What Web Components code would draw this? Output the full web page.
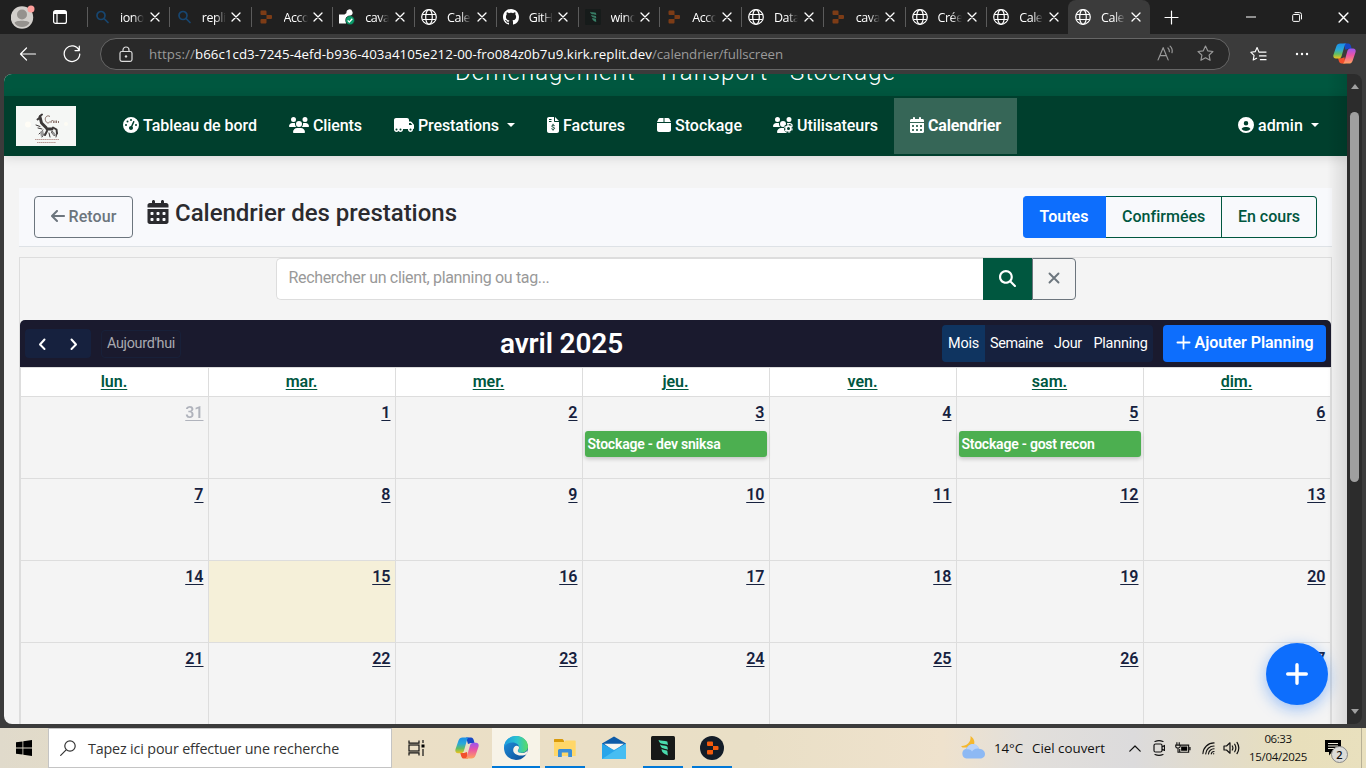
<!DOCTYPE html>
<html lang="fr">
<head>
<meta charset="utf-8">
<title>Calendrier des prestations</title>
<style>
html,body{margin:0;height:100%;overflow:hidden;background:#3b3b3b}
body{font-family:Roboto,"Liberation Sans",sans-serif}
</style>
</head>
<body>
<desktop-screen></desktop-screen>
<script>
const define = (name, html, ready) => customElements.define(name, class extends HTMLElement {
  connectedCallback() {
    if (this.shadowRoot) return;
    const root = this.attachShadow({ mode: 'open' });
    root.innerHTML = typeof html === 'function' ? html(this) : html;
    if (ready) ready(this, root);
  }
});

/* Text run spread over a given width */
define('fit-text', '<style>:host{display:inline-block;white-space:nowrap;flex:none}</style><slot></slot>', el => {
  const w = +el.getAttribute('w');
  const natural = el.getBoundingClientRect().width;
  el.style.letterSpacing = ((w - natural) / el.textContent.length).toFixed(3) + 'px';
  el.style.width = w + 'px';
});

const S = (vb, body) => [vb, body];
const F = (w, d) => [`0 0 ${w} 512`, `<path fill="currentColor" fill-rule="evenodd" d="${d}"/>`];
const L = (vb, d, sw = 1.2) => [vb, `<path fill="none" stroke="currentColor" stroke-width="${sw}" stroke-linecap="round" stroke-linejoin="round" d="${d}"/>`];
const USERS = 'M144 0a80 80 0 1 1 0 160A80 80 0 1 1 144 0zM512 0a80 80 0 1 1 0 160A80 80 0 1 1 512 0zM0 298.7C0 239.8 47.8 192 106.7 192h42.7c15.9 0 31 3.5 44.6 9.7c-1.3 7.2-1.9 14.7-1.9 22.3c0 38.2 16.8 72.5 43.3 96H21.3C9.6 320 0 310.4 0 298.7zM405.3 320c26.6-23.5 43.3-57.8 43.3-96c0-7.6-.7-15-1.9-22.3c13.6-6.3 28.7-9.7 44.6-9.7h42.7C592.2 192 640 239.8 640 298.7c0 11.8-9.6 21.3-21.3 21.3H405.3zM224 224a96 96 0 1 1 192 0 96 96 0 1 1 -192 0zM128 485.3C128 411.7 187.7 352 261.3 352H378.7C452.3 352 512 411.7 512 485.3c0 14.7-11.9 26.7-26.7 26.7H154.7c-14.7 0-26.7-11.9-26.7-26.7z';
const COPILOT = `<defs><linearGradient id="a" x1="0" y1="0" x2="0" y2="1"><stop offset="0" stop-color="#1b8fe8"/><stop offset=".4" stop-color="#2aa8d8"/><stop offset=".7" stop-color="#62bd62"/><stop offset="1" stop-color="#f2c21c"/></linearGradient><linearGradient id="b" x1="0" y1="0" x2="0" y2="1"><stop offset="0" stop-color="#9a55f0"/><stop offset=".45" stop-color="#ea55a4"/><stop offset="1" stop-color="#ffa35e"/></linearGradient></defs>
<path d="M11 1.500h5c1.600 0 2.200 1 2.700 2.600l.8 2.900h-3.500l-3 1z" fill="#1747c4"/><path d="M13 22.500H9c-1.600 0-2.400-1-2.900-2.600L5.300 17H9l3-1z" fill="#f2502c"/>
<path d="M7.500 1.500h6.800c-1.300.2-1.900 1.200-2.300 2.500L9 14.500c-.5 1.700-1.500 2.700-3.300 2.700H3C.8 17.200-.1 15.400.5 13.300L3.500 4.500c.7-2 2-3 4-3z" fill="url(#a)"/>
<path d="M16.500 22.500H9.700c1.300-.2 1.900-1.200 2.300-2.500l3-10.500c.5-1.700 1.500-2.700 3.300-2.700H21c2.200 0 3.100 1.800 2.500 3.900l-3 8.800c-.7 2-2 3-4 3z" fill="url(#b)"/>`;
const REPLIT = c => `<path fill="${c}" d="M1.500 0h4a1 1 0 0 1 1 1v3.500h-5a1 1 0 0 1-1-1V1a1 1 0 0 1 1-1zM6.500 4.500H11a1 1 0 0 1 1 1v2a1 1 0 0 1-1 1H6.500zM1.500 8.500h5V12a1 1 0 0 1-1 1h-4a1 1 0 0 1-1-1V9.500a1 1 0 0 1 1-1z"/>`;
const WIND = c => `<g fill="${c}"><path d="M7.500 4c2.500 1.200 6 .6 8.800 1.600L17 9C13.500 7.500 8.500 9 7.500 4z"/><path d="M9 8.500c2 1.300 4.800.9 7.300 1.900l.7 3.300c-3-1.400-7-.4-8-5.200z"/><path d="M10.500 13c1.500 1 3.500.8 5.800 1.800l.6 4.700c-2.400-1.500-5.800-1.500-6.400-6.500z"/></g>`;

const ICONS = {
  gauge: F(512, 'M0 256a256 256 0 1 1 512 0A256 256 0 1 1 0 256zM288 96a32 32 0 1 0 -64 0 32 32 0 1 0 64 0zM256 416c35.300 0 64-28.700 64-64c0-17.400-6.900-33.100-18.100-44.600L366 161.700c5.300-12.100-.2-26.300-12.300-31.600s-26.300 .2-31.600 12.300L257.900 288c-.6 0-1.300 0-1.900 0c-35.300 0-64 28.700-64 64s28.700 64 64 64zM176 144a32 32 0 1 0 -64 0 32 32 0 1 0 64 0zM96 288a32 32 0 1 0 0-64 32 32 0 1 0 0 64zm352-32a32 32 0 1 0 -64 0 32 32 0 1 0 64 0z'),
  users: F(640, USERS),
  truck: F(640, 'M64 32C28.700 32 0 60.700 0 96V304v80 16c0 44.200 35.800 80 80 80c26.200 0 49.400-12.600 64-32c14.600 19.400 37.800 32 64 32c44.200 0 80-35.800 80-80c0-5.500-.6-10.800-1.600-16H416h33.600c-1 5.200-1.600 10.500-1.600 16c0 44.200 35.800 80 80 80s80-35.800 80-80c0-5.500-.6-10.800-1.600-16H608c17.700 0 32-14.300 32-32V288 272 261.700c0-9.200-3.200-18.200-9-25.300l-58.800-71.800c-10.600-13-26.500-20.500-43.300-20.500H480V96c0-35.300-28.700-64-64-64H64zM585 256H480V192h48.800c2.400 0 4.700 1.100 6.200 2.900L585 256zM528 368a32 32 0 1 1 0 64 32 32 0 1 1 0-64zM176 400a32 32 0 1 1 64 0 32 32 0 1 1 -64 0zM80 368a32 32 0 1 1 0 64 32 32 0 1 1 0-64z'),
  invoice: S('0 0 384 512', '<path fill="currentColor" fill-rule="evenodd" d="M64 0C28.700 0 0 28.700 0 64V448c0 35.300 28.700 64 64 64H320c35.300 0 64-28.700 64-64V160H256c-17.700 0-32-14.300-32-32V0H64zM256 0V128H384L256 0zM64 64h80v32H64zM64 128h80v32H64z"/><path fill="none" stroke="#003f2d" stroke-width="30" stroke-linecap="round" d="M236 272c-24-18-84-18-84 20 0 46 90 22 90 68 0 42-64 42-92 20M194 232v28M194 392v30"/>'),
  box: F(448, 'M50.700 58.500L0 160H208V32H93.700C75.500 32 58.900 42.300 50.700 58.500zM240 160H448L397.300 58.500C389.100 42.300 372.500 32 354.300 32H240V160zm208 32H0V416c0 35.300 28.700 64 64 64H384c35.300 0 64-28.700 64-64V192z'),
  usersgear: S('0 0 640 512', `<path fill="currentColor" d="${USERS}"/><circle cx="496" cy="368" r="146" fill="#003f2d"/><circle cx="496" cy="368" r="76" fill="none" stroke="currentColor" stroke-width="56"/><circle cx="496" cy="368" r="118" fill="none" stroke="currentColor" stroke-width="36" stroke-dasharray="62 61.500"/>`),
  calendar: F(448, 'M128 0c17.700 0 32 14.300 32 32V64H288V32c0-17.700 14.300-32 32-32s32 14.300 32 32V64h48c26.500 0 48 21.500 48 48v48H0V112C0 85.500 21.500 64 48 64H96V32c0-17.700 14.300-32 32-32zM0 192H448V464c0 26.500-21.500 48-48 48H48c-26.500 0-48-21.500-48-48V192zm64 80v32c0 8.800 7.200 16 16 16h32c8.800 0 16-7.200 16-16V272c0-8.800-7.200-16-16-16H80c-8.800 0-16 7.200-16 16zm128 0v32c0 8.800 7.200 16 16 16h32c8.800 0 16-7.200 16-16V272c0-8.800-7.200-16-16-16H208c-8.800 0-16 7.200-16 16zm144-16c-8.800 0-16 7.200-16 16v32c0 8.800 7.200 16 16 16h32c8.800 0 16-7.200 16-16V272c0-8.800-7.200-16-16-16H336zM64 400v32c0 8.800 7.200 16 16 16h32c8.800 0 16-7.200 16-16V400c0-8.800-7.200-16-16-16H80c-8.800 0-16 7.200-16 16zm144-16c-8.800 0-16 7.200-16 16v32c0 8.800 7.200 16 16 16h32c8.800 0 16-7.200 16-16V400c0-8.800-7.200-16-16-16H208zm112 16v32c0 8.800 7.200 16 16 16h32c8.800 0 16-7.200 16-16V400c0-8.800-7.200-16-16-16H336c-8.800 0-16 7.200-16 16z'),
  user: F(512, 'M399 384.200C376.900 345.800 335.400 320 288 320H224c-47.400 0-88.900 25.800-111 64.200c35.200 39.200 86.200 63.800 143 63.800s107.800-24.700 143-63.800zM0 256a256 256 0 1 1 512 0A256 256 0 1 1 0 256zm256 16a72 72 0 1 0 0-144 72 72 0 1 0 0 144z'),
  left: F(448, 'M9.400 233.400c-12.500 12.500-12.500 32.800 0 45.300l160 160c12.500 12.500 32.800 12.500 45.300 0s12.500-32.800 0-45.300L109.200 288 416 288c17.700 0 32-14.300 32-32s-14.300-32-32-32l-306.700 0L214.600 118.600c12.500-12.500 12.500-32.800 0-45.300s-32.800-12.500-45.300 0l-160 160z'),
  search: F(512, 'M416 208c0 45.900-14.900 88.300-40 122.700L502.600 457.400c12.500 12.500 12.500 32.800 0 45.300s-32.800 12.500-45.300 0L330.700 376c-34.400 25.200-76.800 40-122.700 40C93.100 416 0 322.900 0 208S93.100 0 208 0S416 93.100 416 208zM208 352a144 144 0 1 0 0-288 144 144 0 1 0 0 288z'),
  times: L('0 0 12 12', 'M1.500 1.500l9 9M10.500 1.500l-9 9', 1.900),
  plus: L('0 0 16 16', 'M8 1.500v13M1.500 8h13', 1.900),
  plusbold: L('0 0 22 22', 'M11 1.700v18.600M1.700 11h18.600', 3.4),
  plusthin: L('0 0 15 15', 'M7.500 1v13M1 7.500h13', 1.2),
  chevl: L('0 0 8 14', 'M6.500 2.500L2 7.500l4.500 4.500', 2), chevr: L('0 0 8 14', 'M1.500 2.500L6 7.500 1.500 12', 2),
  close: L('0 0 10 10', 'M1 1l8 8M9 1l-8 8', 1.3),
  globe: S('0 0 16 16', '<g fill="none" stroke="currentColor" stroke-width="1.200"><circle cx="8" cy="8" r="7.300"/><ellipse cx="8" cy="8" rx="3.300" ry="7.300"/><path d="M1.500 5.500h13M1.500 10.500h13"/></g>'),
  bluesearch: L('0 0 16 16', 'M10 9.500l4 4M3 6.500a4 4 0 1 0 8 0a4 4 0 1 0-8 0', 1.7),
  replit: S('-1 -1.500 14 16', REPLIT('#7d3c16')),
  github: S('0 0 16 16', '<path fill="currentColor" d="M8 0C3.580 0 0 3.580 0 8c0 3.540 2.290 6.530 5.470 7.590.4.070.55-.17.55-.38 0-.19-.01-.82-.01-1.490-2.010.37-2.530-.49-2.690-.94-.09-.23-.48-.94-.82-1.130-.28-.15-.68-.52-.01-.53.630-.01 1.080.58 1.230.82.720 1.210 1.870.87 2.330.66.070-.52.280-.87.510-1.070-1.780-.2-3.640-.89-3.640-3.950 0-.87.310-1.590.82-2.150-.08-.2-.36-1.020.08-2.120 0 0 .67-.21 2.200.82.640-.18 1.320-.27 2-.27s1.360.09 2 .27c1.530-1.040 2.200-.82 2.200-.82.440 1.100.160 1.920.080 2.120.51.560.82 1.270.82 2.150 0 3.070-1.870 3.750-3.650 3.950.29.250.54.730.54 1.480 0 1.070-.01 1.930-.01 2.200 0 .21.150.46.550.38A8.010 8.010 0 0 0 16 8c0-4.420-3.580-8-8-8z"/>'),
  wind: S('0 0 24 24', '<rect width="24" height="24" rx="2" fill="#161b1a"/>' + WIND('#387e66')),
  windsurf: S('0 0 24 24', '<rect width="24" height="24" rx="1.500" fill="#171918"/>' + WIND('#4adcae')),
  replitapp: S('0 0 24 24', `<circle cx="12" cy="12" r="12" fill="#131c28"/><g transform="translate(6.500 5.500)">${REPLIT('#f25a0c')}</g>`),
  deploy: S('0 0 16 16', '<path fill="#fff" d="M0 5.500h5.500L7.500 4a3 3 0 0 1 5.800-1.500Q14.500 5 12 6.500L7 8.500v6H0z"/><circle cx="11" cy="11.300" r="4.500" fill="#0b9a69" stroke="#202020" stroke-width=".5"/><path fill="none" stroke="#fff" stroke-width="1.300" d="M8.700 11.400l1.600 1.700 3-3.300"/>'),
  avatar: S('0 0 24 24', '<circle cx="11" cy="12.500" r="11.200" fill="#d2cfcb"/><circle cx="11" cy="9.500" r="5" fill="#95928e"/><path fill="#95928e" d="M3.500 18c0-3 15-3 15 0-1.500 2.500-4.500 4-7.500 4s-6-1.500-7.500-4z"/><circle cx="20" cy="4" r="3.500" fill="#ff9f9b"/>'),
  workspace: S('0 0 14 14', '<g fill="none" stroke="#fff" stroke-width="1.200"><rect x=".6" y=".6" width="12.800" height="12.800" rx="2"/><path d="M4 4v9" /></g><path fill="#fff" d="M1 1h12v3H1z"/>'),
  back: L('0 0 18 14', 'M16.500 7H1.500M7.500 1l-6 6 6 6'),
  reload: L('0 0 18 18', 'M16 5.200A7.800 7.800 0 1 0 16.800 9M16.300 1.200v4.300h-4.300', 1.25),
  lock: S('0 0 14 16', '<g fill="none" stroke="#ddd" stroke-width="1.200"><rect x="1" y="5.500" width="12" height="9.800" rx="1.800"/><path d="M4 5.500V4a3 3 0 0 1 6 0v1.500"/></g><circle cx="7" cy="10.400" r="1.200" fill="#ddd"/>'),
  read: L('0 0 16 16', 'M1 14L5.800 2.500 10.500 14M2.700 10h6M10.300 2.800a4 4 0 0 1 1.300 3.500M12.300 1a6.500 6.500 0 0 1 1.800 6.300', 1.1),
  star: L('0 0 16 16', 'M8 1l2.100 4.500 4.900.6-3.600 3.400.9 4.900L8 12l-4.300 2.400.9-4.900L1 6.100l4.900-.6z', 1.1),
  favs: L('0 0 18 16', 'M11 6H9.500L7.500 1.200 5.500 5.500.8 6.100l3.500 3.400-.9 4.900L7 12.500M11 6h6M10 10h7M11 14h6', 1.2),
  dots: S('0 0 14 4', '<g fill="#fff"><circle cx="2" cy="2" r="1.200"/><circle cx="7" cy="2" r="1.200"/><circle cx="12" cy="2" r="1.200"/></g>'),
  copilot: S('0 0 24 24', COPILOT),
  minimize: L('0 0 10 10', 'M0 5h10', 1),
  restore: L('0 0 10 10', 'M.7 3.200q0-.7.7-.7h5.500q.7 0 .7.700v5.500q0 .7-.7.700H1.400q-.7 0-.7-.7zM3 .6h4.500q2 0 2 2V7', 1),
  windows: S('0 0 16 16', '<path d="M0 2.300L6.500 1.400v6.200H0zM7.300 1.300L16 0v7.600H7.300zM0 8.400h6.500v6.200L0 13.700zM7.300 8.400H16V16l-8.700-1.300z"/>'),
  wsearch: L('0 0 16 16', 'M.7 15.300l5.200-5.200M4.800 6a5.200 5.200 0 1 0 10.400 0A5.200 5.200 0 1 0 4.800 6', 1.2),
  taskview: S('0 0 17 16', '<g fill="none" stroke="#111" stroke-width="1.200"><path d="M1 .5v2.700h10V.5M1 15.500v-2.700h10v2.700M15 0v3M15 9v7"/><rect x="1" y="5" width="10" height="6"/></g><path d="M13.500 4.500h3v3h-3z"/>'),
  edge: S('0 0 24 24', '<defs><linearGradient id="t" x1="0" y1=".3" x2="1" y2=".3"><stop stop-color="#1d9be0"/><stop offset=".55" stop-color="#2bc4cf"/><stop offset="1" stop-color="#5ddb62"/></linearGradient><linearGradient id="l" x1="0" y1="0" x2="1" y2="1"><stop stop-color="#1f93e0"/><stop offset="1" stop-color="#0c4a92"/></linearGradient></defs><circle cx="12" cy="12" r="12" fill="url(#l)"/><path fill="url(#t)" d="M0 11.500C.3 5 5.500 0 12 0c7 0 12 5 12 10.500 0 3.800-2.900 6.300-6.300 6.300-2.400 0-3.700-.9-3.700-1.800 0-.7 1.200-1.200 1.200-3.200C15.200 9 12.300 6.500 8.600 6.500 4 6.500 1 9 0 11.500z"/><path fill="#f7f3e8" d="M15 11.500c0 1.900-1.200 2.600-1.200 3.500 0 1 1.500 2 3.900 2 2 0 4.500-.9 6-2.600l-1 3.600c-2 1.600-5.300 1.800-7.600 1.400-4-.6-6.100-3-5.900-5.600.1-2.200 1.600-4 3.500-4 1.300 0 2.300.8 2.300 1.700z"/>'),
  explorer: S('0 0 24 24', '<path fill="#d99a09" d="M1 3.500q0-.5.5-.5h8l1.500 1.500V7H1z"/><path fill="#ffd768" d="M1 6h10l1.500-1.500H22q.7 0 .7.700V20H1z"/><path fill="#3a8ed8" d="M5 21v-6.500q0-1.500 1.500-1.500h11q1.500 0 1.500 1.500V21h-3.800v-4.500H8.800V21z"/>'),
  mail: S('0 0 24 24', '<path fill="#0d5ba8" d="M0 7.500L12 .5l12 7v6H0z"/><path fill="#f7f5f0" d="M2 7.800h20L12 15z"/><path fill="#27a5ea" d="M0 7.500L12 14l12-6.500V23H0z"/><path fill="#46bdf2" d="M0 23L24 7.500V23z"/>'),
  weather: S('0 0 24 24', '<path fill="#f5b82e" d="M9.500 0c4.500 2.800 5 8 2 11.500H1.500L0 10c5 .5 10.500-3.500 9.500-10z"/><path fill="#8db9f4" d="M5.500 22.500a5 5 0 0 1-.3-9.800 6.800 6.800 0 0 1 12.800 0c3.800.3 6 2.600 6 5.300 0 2.800-2.200 4.500-5 4.500z"/><path fill="#b9d3fa" d="M5.500 13.500c1-4 4-5.500 6.500-5.500 3 0 5 2 6 4.500-4-.5-6 1.500-7 3-1-1.800-3-2.500-5.500-2z"/>'),
  up: L('0 0 12 7', 'M.8 6.200L6 1l5.200 5.200', 1.2),
  meet: L('0 0 12 16', 'M2 1.500Q6-.2 10 1.500M2 14.500q4 1.700 8 0M2.500 4h5q1.500 0 1.500 1.500v5Q9 12 7.500 12h-5Q1 12 1 10.500v-5Q1 4 2.500 4zM9 7l2.500-1.500v5L9 9', 1.2),
  battery: S('0 0 17 14', '<g fill="none" stroke="#111" stroke-width="1.200"><path d="M5 4h9.500v7.500H5V8M2 1v3M4.500 1v3M.8 4h4.700v1.500Q5.500 7 3.200 7T.8 5.500zM3.200 7v4.500H5"/></g><path d="M6.500 5.500H13V10H6.500zM15.200 6h1.300v3.500h-1.300z"/>'),
  wifi: L('0 0 14 14', 'M1 13A12 12 0 0 1 13 1.500M4 13.300a9 9 0 0 1 9-8.500M7 13.400a6 6 0 0 1 6-5.600M10 13.400a3 3 0 0 1 3-2.600M12.600 13v.3', 1.2),
  volume: L('0 0 17 14', 'M1 5h2.500L7 1.800v10.400L3.500 9H1zM9.300 5q1.200 2 0 4M11.700 3.200q2.300 3.800 0 7.600M14 1.400q3.600 5.600 0 11.200', 1.2),
  notif: S('0 0 16 16', '<path d="M0 0h16v12H7l-3 3.500V12H0z"/><path stroke="#f0ecdc" stroke-width="1.100" d="M3 3.500h10M3 6h10M3 8.500h7"/>'),
  horse: S('0 0 60 40', '<rect width="60" height="40" fill="#f5f7f5"/><circle cx="12" cy="18.500" r="3" fill="#fffdf6"/><circle cx="50" cy="18" r="2" fill="#fdfcf4"/><g fill="none" stroke="#3c3838" stroke-linecap="round"><path stroke-width="3" d="M24 11l1.500 6M26 17.500l4 4M31 23h5"/><path stroke-width="2" d="M21.500 13.500l2.500-2M24 10l2-1.500M37 21.500l3.500 2 .5 4M31 25l-2 4M36 26l2.500 3"/><path stroke-width="1" d="M20 19l4 1.500M22 22l4 1M28 28l-2 3M41 27l-1 4M33 27l1 4M27 24l-4 4"/></g><g fill="none" stroke="#7b5f58" stroke-width=".9"><path d="M34 10.500c-3-2-5.500 1-4.500 4s3.500 3 4.500 1M35 17q-.5-2.500 1.500-2.500T37.500 17M39 14.500v2.500M40.500 17v-2.500M42.500 15v2"/></g><path stroke="#b99b96" stroke-width="1.200" stroke-dasharray="1.500 .4" d="M19 33.500h24M21 36.500h19"/><path fill="#999" d="M24 26l3-2 1 4-3 3zM35 25l4 2 1 3-3-1z"/>')
};
customElements.define('x-icon', class extends HTMLElement {
  connectedCallback() {
    if (this.shadowRoot) return;
    const [vb, body] = ICONS[this.getAttribute('n')];
    const w = this.getAttribute('w'), h = this.getAttribute('h') || w;
    this.attachShadow({ mode: 'open' }).innerHTML =
      `<style>:host{display:block;flex:none;width:${w}px;height:${h}px}svg{display:block;width:100%;height:100%}</style><svg viewBox="${vb}">${body}</svg>`;
  }
});

/* ---------- Browser chrome ---------- */
define('browser-tab', el => `<style>
:host{display:flex;align-items:center;box-sizing:border-box;width:81.750px;height:34px;flex:none;padding-left:7px;color:#fff;font:12.500px "Open Sans","Noto Sans",sans-serif;position:relative}
:host::before{content:"";position:absolute;left:0;top:7px;width:1px;height:20px;background:#5b5b5b}
:host([active]){background:#3b3b3b;border-radius:8px 8px 0 0}
:host([active])::before{display:none}
.i{width:16px;display:flex;justify-content:center}
.t{width:24px;margin:0 5.500px 0 10px;overflow:hidden;white-space:nowrap;letter-spacing:-.45px;-webkit-mask-image:linear-gradient(90deg,#000 55%,transparent)}
</style><span class="i"><x-icon n="${el.getAttribute('icon')}" w="16" style="color:${el.getAttribute('icon') === 'bluesearch' ? '#174670' : '#fff'}"></x-icon></span><span class="t"><slot></slot></span><x-icon n="close" w="10"></x-icon>`);

define('tab-strip', () => {
  const tabs = [['bluesearch', 'ionos'], ['bluesearch', 'replit'], ['replit', 'Acco'], ['deploy', 'caval'], ['globe', 'Calen'], ['github', 'GitHu'], ['wind', 'winds'], ['replit', 'Acco'], ['globe', 'Datab'], ['replit', 'caval'], ['globe', 'Créer'], ['globe', 'Calen'], ['globe', 'Calen']];
  return `<style>:host{display:flex;height:34px;background:#202020;color:#fff;align-items:center}
.a{width:87px;display:flex;align-items:center;gap:18px;padding-left:11px;box-sizing:border-box}
.n{width:43px;display:flex;justify-content:center}.g{flex:1}.c{width:46px;display:flex;justify-content:center}</style>
<div class="a"><x-icon n="avatar" w="24"></x-icon><x-icon n="workspace" w="14"></x-icon></div>
${tabs.map(([i, t], k) => `<browser-tab icon="${i}" ${k === 12 ? 'active' : ''}>${t}</browser-tab>`).join('')}
<div class="n"><x-icon n="plusthin" w="15"></x-icon></div><span class="g"></span>
<div class="c"><x-icon n="minimize" w="10"></x-icon></div><div class="c"><x-icon n="restore" w="10"></x-icon></div><div class="c"><x-icon n="close" w="11"></x-icon></div>`;
});

define('address-bar', `<style>
:host{display:flex;height:39px;background:#3b3b3b;align-items:center;color:#fff;font:13.300px "Open Sans","Noto Sans",sans-serif}
.b{width:100px;display:flex;gap:26px;padding-left:19px;box-sizing:border-box;align-items:center}
.p{width:1130px;height:32px;box-sizing:border-box;border:1px solid #666;border-radius:16px;background:#292929;display:flex;align-items:center;padding:0 15px 0 18px;color:#9a9a9a}
.p .u{flex:1;margin-left:16px;display:flex}
.r{flex:1;display:flex;align-items:center;padding-left:20px}
</style><div class="b"><x-icon n="back" w="18" h="14"></x-icon><x-icon n="reload" w="18"></x-icon></div>
<div class="p"><x-icon n="lock" w="14" h="16"></x-icon><span class="u"><fit-text w="46">https://</fit-text><fit-text w="457" style="color:#fff">b66c1cd3-7245-4efd-b936-403a4105e212-00-fro084z0b7u9.kirk.replit.dev</fit-text><fit-text w="131">/calendrier/fullscreen</fit-text></span><x-icon n="read" w="17" style="margin-right:23px"></x-icon><x-icon n="star" w="17"></x-icon></div>
<div class="r"><x-icon n="favs" w="17" h="16"></x-icon><x-icon n="dots" w="14" h="4" style="margin:0 24px 0 28px"></x-icon><x-icon n="copilot" w="23"></x-icon></div>`);

define('scroll-bar', `<style>
:host{display:flex;flex-direction:column;align-items:center;box-sizing:border-box;width:15px;height:100%;background:#2c2c2c;padding:10px 0}
i{width:0;height:0;border:4.500px solid transparent;border-top-width:0;border-bottom:5px solid #a0a0a0}
i.d{border:4.500px solid transparent;border-bottom-width:0;border-top:5px solid #a0a0a0;margin-top:auto}
b{width:9px;height:370px;border-radius:5px;background:#9f9f9f;margin-top:23px}
</style><i></i><b></b><i class="d"></i>`);

/* ---------- Site ---------- */
define('nav-item', el => `<style>
:host{display:flex;align-items:center;height:56px;box-sizing:border-box;padding:0 0 2px 16px;color:#fff;font:500 16px Roboto,sans-serif;flex:none;width:${el.getAttribute('width')}px}
:host([active]){background:#366657;font-weight:700}
x-icon{margin-right:4px}
.c{border:4.500px solid transparent;border-top:4.500px solid #fff;border-bottom:0;margin-left:8px}
</style><x-icon n="${el.getAttribute('icon')}" w="${el.getAttribute('iw')}" h="16"></x-icon><fit-text w="${el.getAttribute('tw')}">${el.getAttribute('label')}</fit-text>${el.hasAttribute('caret') ? '<span class="c"></span>' : ''}`);

define('site-nav', `<style>
:host{display:flex;align-items:center;height:60px;flex:none;background:#003f2d;box-shadow:0 2px 10px rgba(0,0,0,.12);position:relative}
.l{margin:0 31px 0 12px}.g{flex:1}
</style><x-icon class="l" n="horse" w="60" h="40"></x-icon>
<nav-item width="166" icon="gauge" iw="16" tw="114" label="Tableau de bord"></nav-item>
<nav-item width="105" icon="users" iw="20" tw="49" label="Clients"></nav-item>
<nav-item width="153" icon="truck" iw="20" tw="81" label="Prestations" caret></nav-item>
<nav-item width="110" icon="invoice" iw="12" tw="62" label="Factures"></nav-item>
<nav-item width="116" icon="box" iw="14" tw="67" label="Stockage"></nav-item>
<nav-item width="137" icon="usersgear" iw="20" tw="81" label="Utilisateurs"></nav-item>
<nav-item width="123" icon="calendar" iw="14" tw="73" label="Calendrier" active></nav-item>
<span class="g"></span><nav-item width="125" icon="user" iw="16" tw="45" label="admin" caret></nav-item>`);

define('page-header', `<style>
:host{display:flex;box-sizing:border-box;height:59px;margin:32px 15px 10px;padding:8px 15px 0;background:#f8f9fc;border-bottom:1px solid #dee2e6;font:500 16px Roboto,sans-serif;flex:none}
.b{height:42px;box-sizing:border-box;display:flex;align-items:center;justify-content:center;padding-bottom:2px}
.r{width:99px;border:1px solid #6c757d;border-radius:4px;color:#6c757d;gap:4px}
h1{margin:4px 0 0 14px;font:500 24px/26px Roboto,sans-serif;color:#2b2b2f;display:flex;gap:6px;height:28px}
.g{margin-left:auto;display:flex;color:#00573f}
.g div{border:1px solid #00573f;border-left-width:0}
.g .f{width:83px;background:#0d6efd;border-color:#0d6efd;color:#fff;border-radius:4px 0 0 4px}
</style><div class="b r"><x-icon n="left" w="14" h="16"></x-icon><fit-text w="48">Retour</fit-text></div>
<h1><x-icon n="calendar" w="22" h="24"></x-icon><fit-text w="282">Calendrier des prestations</fit-text></h1>
<div class="g"><div class="b f"><fit-text w="49" style="font-weight:600">Toutes</fit-text></div><div class="b" style="width:116px"><fit-text w="83">Confirmées</fit-text></div><div class="b" style="width:95px;border-radius:0 4px 4px 0"><fit-text w="62">En cours</fit-text></div></div>`);

define('search-bar', `<style>
:host{display:flex;height:42px;width:800px;margin:0 auto 20px 256px;font:400 16px Roboto,sans-serif;color:#999}
div{box-sizing:border-box;display:flex;align-items:center;justify-content:center;padding-bottom:2px}
.i{width:707px;background:#fff;border:1px solid #ddd;border-right:0;border-radius:5px 0 0 5px;justify-content:flex-start;padding:0 0 3px 11.500px}
.s{width:49px;background:#00573f;color:#fff}.x{width:44px;border:1px solid #6c757d;border-radius:0 4px 4px 0;color:#6c757d;padding-right:1px}
</style><div class="i"><fit-text w="261">Rechercher un client, planning ou tag...</fit-text></div><div class="s"><x-icon n="search" w="17"></x-icon></div><div class="x"><x-icon n="times" w="12"></x-icon></div>`);

define('calendar-toolbar', `<style>
:host{display:flex;align-items:center;height:47px;background:#1a1a2e;border-radius:5px 5px 0 0;color:#fff;padding:0 5px;font:400 14.400px Roboto,sans-serif}
div{display:flex;align-items:center;justify-content:center;box-sizing:border-box}
.n{width:66px;height:29px;background:#16213e;border-radius:4px;gap:24px;padding:1px 1px 0 0}
.a{width:80px;height:28px;margin-left:10px;border:1px solid #182039;border-radius:4px;color:#a9a9b0}
.t{margin-left:319px;font:600 28px Roboto,sans-serif}
.v{margin-left:auto;height:37px;background:#16213e;border-radius:4px;width:211px;justify-content:flex-start}
.m{width:43px;height:37px;background:#0f3460;border-radius:4px 0 0 4px;margin-right:5px}
.p{width:163px;height:37px;background:#0d6efd;border-radius:4px;margin-left:10px;font:600 16px Roboto,sans-serif;gap:4px;padding-bottom:2px}
</style><div class="n"><x-icon n="chevl" w="8" h="14"></x-icon><x-icon n="chevr" w="8" h="14"></x-icon></div><div class="a"><fit-text w="68">Aujourd'hui</fit-text></div>
<div class="t"><fit-text w="123">avril 2025</fit-text></div>
<div class="v"><div class="m"><fit-text w="31">Mois</fit-text></div><fit-text w="53">Semaine</fit-text><fit-text w="28" style="margin:0 11.500px 0 11px">Jour</fit-text><fit-text w="54">Planning</fit-text></div>
<div class="p"><x-icon n="plus" w="15"></x-icon><fit-text w="119">Ajouter Planning</fit-text></div>`);

define('day-cell', el => `<style>
:host{display:block;box-sizing:border-box;height:82px;border-right:1px solid #ddd;border-bottom:1px solid #ddd;padding:6px 2px 0;text-align:right;font:600 16px/20px Roboto,sans-serif;color:#16213e}
:host([out]) u{opacity:.3}:host([today]){background:#f5f0d9}
u{margin-right:2.500px;text-underline-offset:2px;text-decoration-thickness:1px}
.e{display:flex;align-items:center;height:26px;margin-top:8px;box-sizing:border-box;padding-left:2.500px;border-radius:3px;background:#4caf50;color:#fff;font-size:14px;box-shadow:0 2px 4px rgba(0,0,0,.2)}
</style><u>${el.getAttribute('n')}</u>${el.hasAttribute('event') ? `<div class="e"><fit-text w="133">${el.getAttribute('event')}</fit-text></div>` : ''}`);

define('month-grid', () => {
  const days = [31, ...Array.from({ length: 27 }, (_, i) => i + 1)];
  const ev = { 3: 'Stockage - dev sniksa', 5: 'Stockage - gost recon' };
  return `<style>
:host{display:grid;grid-template-columns:188px repeat(6,187px);width:1311px;border-left:1px solid #ddd;border-top:1px solid #ddd;box-sizing:border-box}
.h{height:29px;box-sizing:border-box;background:#fff;border-right:1px solid #ddd;border-bottom:1px solid #ddd;text-align:center;font:600 16px/27px Roboto,sans-serif;color:#00573f;padding-right:1px}
.h u{text-underline-offset:2px;text-decoration-thickness:1px}
</style>${['lun.', 'mar.', 'mer.', 'jeu.', 'ven.', 'sam.', 'dim.'].map(d => `<div class="h"><u>${d}</u></div>`).join('')}
${days.map(n => `<day-cell n="${n}" ${n === 31 ? 'out' : ''} ${n === 15 ? 'today' : ''} ${ev[n] ? `event="${ev[n]}"` : ''}></day-cell>`).join('')}`;
});

define('site-page', `<style>
:host{display:flex;flex-direction:column;position:relative;width:1343px;height:650px;overflow:hidden;background:#f4f4f4}
.hero{height:22px;flex:none;background:#00573f;color:#fff;overflow:hidden;display:flex;align-items:flex-end;justify-content:center}
.hero fit-text{font:300 24px/24px Roboto,sans-serif;margin-bottom:12px}
.cal{margin:0 15px;border:1px solid #ddd;height:700px;flex:none}
.edge{position:absolute;right:0;top:0;bottom:0;width:20px;background:linear-gradient(90deg,transparent,rgba(0,0,0,.11))}
.fab{position:absolute;left:1262px;top:569px;width:62px;height:62px;border-radius:50%;background:#0d6efd;color:#fff;display:flex;align-items:center;justify-content:center;box-shadow:0 4px 15px rgba(13,110,253,.4)}
</style><div class="hero"><fit-text w="441">Déménagement - Transport - Stockage</fit-text></div>
<site-nav></site-nav><page-header></page-header>
<div class="cal"><search-bar></search-bar><calendar-toolbar></calendar-toolbar><month-grid></month-grid></div>
<div class="edge"></div><div class="fab"><x-icon n="plusbold" w="22"></x-icon></div>`);

/* ---------- Taskbar ---------- */
define('task-button', el => `<style>
:host{display:flex;width:48px;margin-right:1px;height:40px;box-sizing:border-box;align-items:center;justify-content:center;position:relative;flex:none}
:host([open])::after{content:"";position:absolute;left:4px;right:4px;bottom:0;height:2px;background:#0078d7}
:host([active]){background:#f7f3e8}:host([active])::after{left:0;right:0}
</style><x-icon n="${el.getAttribute('icon')}" w="24"></x-icon>`);

define('task-bar', `<style>
:host{display:flex;height:40px;align-items:center;background:linear-gradient(90deg,#e0dacb 0,#e2dbc9 4%,#ebdfc6 28%,#e9dfc6 55%,#efe2cd 69%,#e2dfdb 75%,#dcdbdc 83%,#e2dccb 89%,#e8dfbb 95%,#e9e0be);font:15px "Open Sans","Noto Sans",sans-serif;color:#111}
.w{width:48px;display:flex;justify-content:center}
.s{width:344px;height:40px;box-sizing:border-box;background:#fff;border:1px solid #c4c4c4;display:flex;align-items:center;gap:12px;padding:0 0 0 11px;font-size:14.300px;color:#333}
.s fit-text{margin-top:1px}
.v{width:51px;padding-right:3px;box-sizing:border-box;display:flex;justify-content:center}
.t{margin-left:auto;display:flex;align-items:center;height:40px;font-size:13.300px}
.c{display:flex;flex-direction:column;align-items:center;font-size:11.500px;line-height:18px;margin-left:9px}
.n{position:relative;margin:0 20px 0 18px}
.n b{position:absolute;left:6px;top:6px;width:15px;height:15px;border:1px solid #888;border-radius:50%;background:#dcdcd8;font:600 11px/15px "Open Sans",sans-serif;text-align:center}
.d{width:4px;height:40px;border-left:1px solid #b7b096}
</style><div class="w"><x-icon n="windows" w="16"></x-icon></div>
<div class="s"><x-icon n="wsearch" w="16"></x-icon><fit-text w="251">Tapez ici pour effectuer une recherche</fit-text></div>
<div class="v"><x-icon n="taskview" w="17" h="16"></x-icon></div>
<task-button icon="copilot"></task-button><task-button icon="edge" open active></task-button><task-button icon="explorer" open></task-button><task-button icon="mail"></task-button><task-button icon="windsurf" open></task-button><task-button icon="replitapp" open></task-button>
<div class="t"><x-icon n="weather" w="24"></x-icon><fit-text w="29" style="margin:0 9px 0 9px">14°C</fit-text><fit-text w="73">Ciel couvert</fit-text>
<x-icon n="up" w="12" h="7" style="margin:0 12px 0 24px"></x-icon><x-icon n="meet" w="12" h="16" style="margin-right:10px"></x-icon><x-icon n="battery" w="16" h="14" style="margin-right:11px"></x-icon><x-icon n="wifi" w="13" h="14" style="margin-right:8px"></x-icon><x-icon n="volume" w="17" h="14"></x-icon>
<div class="c"><fit-text w="27">06:33</fit-text><fit-text w="58">15/04/2025</fit-text></div>
<div class="n"><x-icon n="notif" w="16"></x-icon><b>2</b></div><span class="d"></span></div>`);

define('desktop-screen', `<style>
:host{display:flex;flex-direction:column;width:1366px;height:768px;background:#3b3b3b;overflow:hidden}
.p{display:flex;height:650px;width:1358px;margin:1px 4px 4px;border-radius:8px;overflow:hidden}
</style><tab-strip></tab-strip><address-bar></address-bar><div class="p"><site-page></site-page><scroll-bar></scroll-bar></div><task-bar></task-bar>`);
</script>
</body>
</html>
